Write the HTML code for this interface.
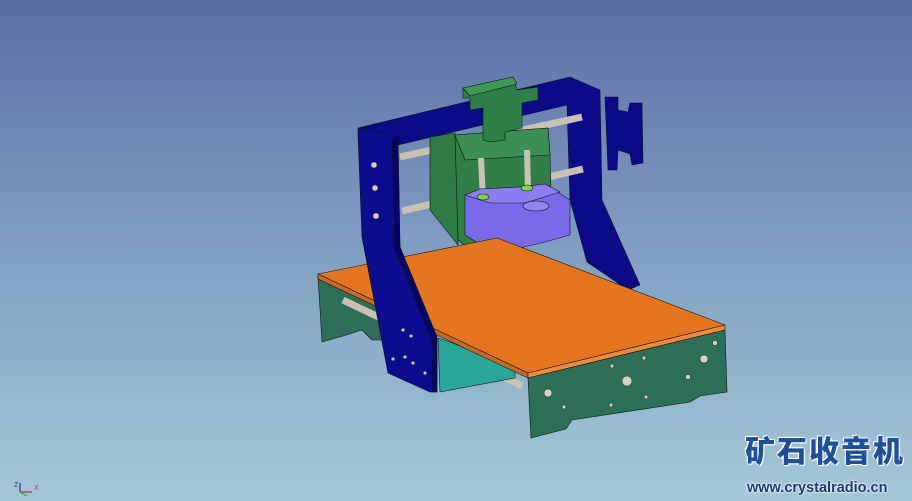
<!DOCTYPE html>
<html><head><meta charset="utf-8"><style>
html,body{margin:0;padding:0;width:912px;height:501px;overflow:hidden}
body{background:linear-gradient(#5a6ea6,#7f9fc2 50%,#a3c9d6);position:relative;font-family:"Liberation Sans",sans-serif}
svg{position:absolute;left:0;top:0}
.wm{position:absolute;left:745px;top:436px;white-space:nowrap;font-family:"Liberation Sans","Noto Sans CJK SC",sans-serif;font-weight:900;font-size:30px;line-height:34px;letter-spacing:2px;color:#1d4f9c;text-shadow:0 0 2px #fff,0 0 2px #fff,1px 1px 0 #fff,-1px -1px 0 #fff}
.url{position:absolute;left:747px;top:479px;white-space:nowrap;font-weight:bold;font-size:14.5px;line-height:18px;color:#163a7a;text-shadow:0 0 2px #fff,0 0 2px #fff}
</style></head><body>
<svg width="912" height="501" viewBox="0 0 912 501">
<g stroke="#111" stroke-width="0.6" stroke-linejoin="round">
<polygon points="358,128 570,77 600,90 602,200 640,285 628,290 587,262 570,200 567,105 398,145 398,137" fill="#0b0b88"/>
<polygon points="605,97 618,97 618,110 628,112 630,103 642,103 643,163 632,165 630,154 618,150 617,170 608,170" fill="#0b0b8a"/>
<line x1="400" y1="157" x2="582" y2="117" stroke="#c9c2b2" stroke-width="7"/>
<line x1="402" y1="211" x2="583" y2="169" stroke="#c9c2b2" stroke-width="7"/>
<polygon points="430,137 455,133 458,200 458,245 430,210" fill="#2f7a45"/>
<polygon points="455,135 548,128 550,155 552,230 500,250 470,250 458,240" fill="#2f7f46"/>
<polygon points="455,135 548,128 550,155 465,160" fill="#3b8f52"/>
<polygon points="463,88 513,77 517,90 538,87 538,100 522,103 522,128 505,132 505,140 490,142 483,140 483,108 470,110 470,98 463,98" fill="#2f8046"/>
<polygon points="463,88 513,77 517,84 470,96" fill="#3d9a55"/>
<line x1="481" y1="158" x2="483" y2="200" stroke="#c9c2b2" stroke-width="6"/>
<line x1="527" y1="150" x2="528" y2="190" stroke="#c9c2b2" stroke-width="6"/>
<polygon points="465,195 480,189 520,187 545,184 570,200 570,235 545,242 520,248 478,243 465,235" fill="#7a6aea"/>
<polygon points="465,195 480,189 520,187 545,184 560,192 525,203 490,203" fill="#8c7ef2"/>
<ellipse cx="483" cy="197" rx="6" ry="3" fill="#7cd83c"/><ellipse cx="527" cy="188" rx="6" ry="3" fill="#7cd83c"/>
<ellipse cx="536" cy="206" rx="13" ry="5" fill="#9486f0"/>
<polygon points="318,276 383,302 385,340 372,340 362,330 343,336 322,342" fill="#2e6e58"/>
<line x1="343" y1="300" x2="522" y2="386" stroke="#c9c2b2" stroke-width="7"/>
<polygon points="438,338 450,342 515,368 515,378 440,392" fill="#26a79a"/>
<polygon points="318,274 497,238 725,325 528,373" fill="#e5761f"/>
<polygon points="318,274 528,373 528,378 318,279" fill="#c96a20"/>
<polygon points="528,373 725,325 725,330 528,378" fill="#f08a3a"/>
<polygon points="528,378 725,330 727,392 700,396 690,402 572,420 566,429 531,438" fill="#2d6e56"/>
<polygon points="358,128 398,137 398,145 400,247 437,337 437,392 430,392 388,373 362,237 358,135" fill="#0c0c8e"/>
<polygon points="398,137 400,247 437,337 437,392 432,392 432,340 395,250 392,140" fill="#05056a"/>
</g>
<g fill="#d8d0c0" stroke="#222" stroke-width="0.5">
<circle cx="374" cy="165" r="3"/><circle cx="375" cy="188" r="3"/><circle cx="376" cy="216" r="3"/>
<circle cx="627" cy="381" r="5"/><circle cx="704" cy="359" r="4"/><circle cx="548" cy="393" r="4"/>
<circle cx="688" cy="377" r="2.5"/><circle cx="612" cy="366" r="2"/><circle cx="644" cy="358" r="2"/>
<circle cx="564" cy="407" r="2"/><circle cx="611" cy="405" r="2"/><circle cx="646" cy="397" r="2"/><circle cx="715" cy="343" r="2.5"/>
<circle cx="403" cy="330" r="1.8"/><circle cx="411" cy="336" r="1.8"/><circle cx="405" cy="357" r="1.8"/><circle cx="413" cy="363" r="1.8"/><circle cx="425" cy="373" r="1.8"/><circle cx="393" cy="359" r="1.8"/>
</g>
<g stroke-width="1.2"><line x1="20" y1="492" x2="32" y2="492" stroke="#c33"/><line x1="20" y1="492" x2="20" y2="483" stroke="#33a"/><line x1="20" y1="492" x2="27" y2="496" stroke="#3a3"/></g>
<text x="14" y="487" font-size="7" fill="#339" font-family="Liberation Sans">Z</text>
<text x="34" y="490" font-size="7" fill="#c33" font-family="Liberation Sans">X</text>
</svg>
<div class="wm">矿石收音机</div>
<div class="url">www.crystalradio.cn</div>
</body></html>
